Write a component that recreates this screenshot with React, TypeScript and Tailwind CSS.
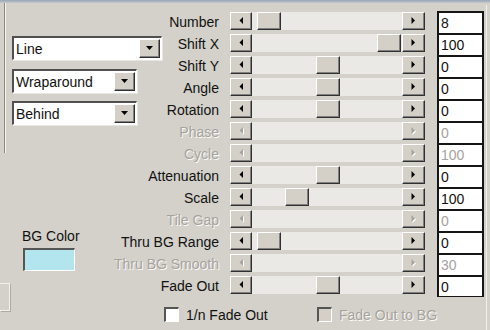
import React from 'react';

type Row = {
  label: string;
  value: string;
  thumb?: number;
  disabled?: boolean;
};

const rows: Row[] = [
  { label: 'Number', value: '8', thumb: 5 },
  { label: 'Shift X', value: '100', thumb: 125 },
  { label: 'Shift Y', value: '0', thumb: 64 },
  { label: 'Angle', value: '0', thumb: 64 },
  { label: 'Rotation', value: '0', thumb: 64 },
  { label: 'Phase', value: '0', disabled: true },
  { label: 'Cycle', value: '100', disabled: true },
  { label: 'Attenuation', value: '0', thumb: 64 },
  { label: 'Scale', value: '100', thumb: 33 },
  { label: 'Tile Gap', value: '0', disabled: true },
  { label: 'Thru BG Range', value: '0', thumb: 5 },
  { label: 'Thru BG Smooth', value: '30', disabled: true },
  { label: 'Fade Out', value: '0', thumb: 64 },
];

const raised =
  'bg-[#d4d0c8] border-t border-l border-t-white border-l-white border-b border-r border-b-[#303030] border-r-[#303030] shadow-[inset_-1px_-1px_0_#808080]';

const disabledText = 'text-[#a5a39e] [text-shadow:1px_1px_0_#fbfaf8]';

const Arrow = ({ dir, disabled }: { dir: 'left' | 'right' | 'down'; disabled?: boolean }) => {
  const fill = disabled ? '#a5a39e' : '#000';
  if (dir === 'down') {
    return (
      <svg width="8" height="5" viewBox="0 0 8 5">
        <path d="M0 0h7L3.5 4z" fill={fill} />
      </svg>
    );
  }
  return (
    <svg width="5" height="8" viewBox="0 0 5 8" className={disabled ? 'drop-shadow-[1px_1px_0_#fff]' : ''}>
      {dir === 'left' ? <path d="M4 0v7L0.5 3.5z" fill={fill} /> : <path d="M0.5 0v7L4 3.5z" fill={fill} />}
    </svg>
  );
};

const Combo = ({ text, width }: { text: string; width: string }) => (
  <div
    className={`${width} h-[24px] flex items-center bg-white border-t-2 border-l-2 border-t-[#505050] border-l-[#505050] border-b border-r border-b-white border-r-white shadow-[1px_1px_0_#e8e6e2]`}
  >
    <span className="flex-1 pl-[2px] text-[14px] leading-none text-[#111]">{text}</span>
    <div className={`${raised} w-[21px] h-[19px] mr-[1px] flex items-center justify-center`}>
      <Arrow dir="down" />
    </div>
  </div>
);

const Slider = ({ row }: { row: Row }) => (
  <div className="flex h-[18px] mt-[1px] self-start">
    <div className={`${raised} w-[22px] h-full flex items-center justify-center`}>
      <Arrow dir="left" disabled={row.disabled} />
    </div>
    <div className="relative w-[150px] h-full bg-[#ebe9e5]">
      {row.thumb !== undefined && (
        <div className={`${raised} absolute top-0 w-[24px] h-full`} style={{ left: row.thumb }} />
      )}
    </div>
    <div className={`${raised} w-[23px] h-full flex items-center justify-center`}>
      <Arrow dir="right" disabled={row.disabled} />
    </div>
  </div>
);

const Checkbox = ({ disabled }: { disabled?: boolean }) => (
  <div
    className={`w-[15px] h-[15px] border-t-2 border-l-2 border-t-[#555] border-l-[#555] border-b border-r border-b-white border-r-white ${
      disabled ? 'bg-[#d4d0c8]' : 'bg-white'
    }`}
  />
);

export default function App() {
  return (
    <div className="w-[490px] h-[330px] flex flex-col overflow-hidden bg-[#d4d1ca] font-['Liberation_Sans',Arial,sans-serif] text-[#111]">
      {/* title edge */}
      <div className="h-[3px] bg-gradient-to-b from-[#98a4b6] to-[#c5c9ce]" />

      <div className="flex flex-1">
        {/* group box edge */}
        <div className="w-[12px] flex flex-col">
          <div className="ml-[4px] w-[2px] h-[150px] border-l border-l-[#8a8780] border-r border-r-[#f6f5f2]" />
          <div className="mt-[130px] w-[10px] h-[28px] border-t border-r border-b border-[#f2f1ee] shadow-[1px_1px_0_#aeaba5]" />
        </div>

        {/* left panel */}
        <div className="w-[135px] flex flex-col">
          <div className="mt-[33px]">
            <Combo text="Line" width="w-[150px]" />
          </div>
          <div className="mt-[9px]">
            <Combo text="Wraparound" width="w-[125px]" />
          </div>
          <div className="mt-[8px]">
            <Combo text="Behind" width="w-[125px]" />
          </div>
          <div className="mt-[103px] ml-[10px] text-[14px] leading-[16px]">BG Color</div>
          <div className="mt-[4px] ml-[11px] w-[52px] h-[23px] bg-[#b3e5ef] border-t-2 border-l-2 border-t-[#555] border-l-[#555] border-b border-r border-b-white border-r-white" />
        </div>

        {/* sliders */}
        <div className="flex flex-col">
          <div className="mt-[8px] flex flex-col">
            {rows.map((row, i) => (
              <div key={row.label} className="flex items-center h-[22px]">
                <div className="w-[72px] flex justify-end whitespace-nowrap">
                  <span className={`text-[14px] leading-none ${row.disabled ? disabledText : ''}`}>{row.label}</span>
                </div>
                <div className="ml-[11px] h-full flex">
                  <Slider row={row} />
                </div>
                <div
                  className={`ml-[12px] w-[47px] h-[22px] bg-white border-t-2 border-l-2 border-r-2 border-[#161616] flex items-center pl-[2px] text-[14px] leading-none ${
                    i === rows.length - 1 ? 'border-b' : ''
                  } ${row.disabled ? 'text-[#a5a39e]' : ''}`}
                >
                  {row.value}
                </div>
              </div>
            ))}
          </div>

          <div className="mt-[10px] flex items-center">
            <div className="ml-[17px] w-[153px] flex items-center">
              <Checkbox />
              <span className="ml-[7px] text-[14px] leading-none">1/n Fade Out</span>
            </div>
            <div className="flex items-center">
              <Checkbox disabled />
              <span className={`ml-[7px] text-[14px] leading-none ${disabledText}`}>Fade Out to BG</span>
            </div>
          </div>
        </div>

        <div className="ml-[2px] mt-[2px] w-px h-full bg-[#f1f0ec]" />
      </div>
    </div>
  );
}
